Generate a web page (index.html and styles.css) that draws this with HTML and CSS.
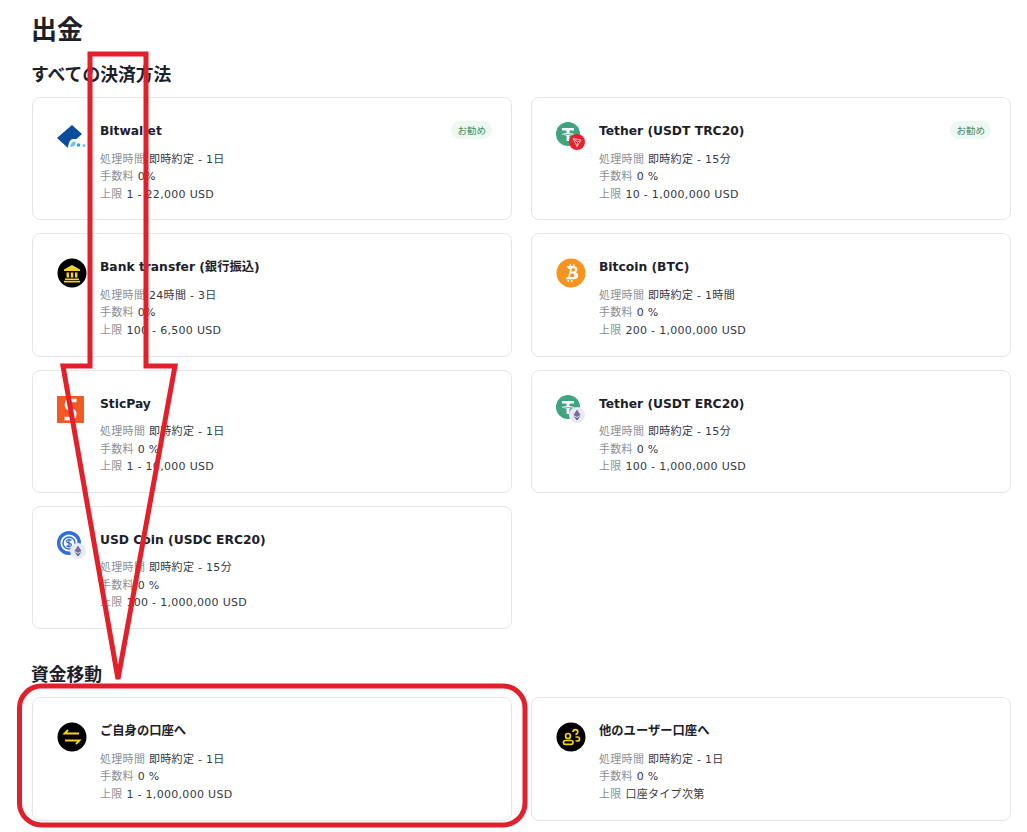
FILE: index.html
```html
<!DOCTYPE html>
<html lang="ja">
<head>
<meta charset="utf-8">
<title>出金</title>
<link rel="stylesheet" href="styles.css">
</head>
<body>
<svg class="defs" width="0" height="0" aria-hidden="true">
  <defs>
    <symbol id="tether" viewBox="0 0 24 24">
      <circle cx="12" cy="12" r="12" fill="#3fa47f"/>
      <path d="M6 6h12v2.400h-4.600v2.500c2.700.2 4.700.7 4.700 1.300s-2 1.100-4.700 1.300V19h-2.800v-5.500c-2.700-.2-4.700-.7-4.700-1.300s2-1.100 4.700-1.300V8.400H6z" fill="#fff"/>
      <path d="M6.500 12.100c1.500.5 9.500.5 11 0" fill="none" stroke="#3fa47f" stroke-width=".7"/>
    </symbol>
    <symbol id="eth" viewBox="0 0 16 16">
      <circle cx="8" cy="8" r="8" fill="#e9e9f3"/>
      <path d="M8 2.500 4.500 8 8 10l3.500-2z" fill="#6f6fa8"/>
      <path d="M4.500 9 8 13.500 11.500 9 8 11z" fill="#5a5a90"/>
    </symbol>
  </defs>
</svg>
<main class="page">
  <h1 class="page-title">出金</h1>
  <h2 class="section-title">すべての決済方法</h2>
  <section class="card-grid">
    <article class="card">
      <svg class="icon" viewBox="0 0 30 30"><path d="M15 3 25 12 19.500 17H16.500C13.500 17 11.500 20 11 26L0 16z" fill="#0b4c9c"/><path d="M13 25c.5-3 2-5.500 4-5.500s2 1.500 1.500 2.500-2 3-5.500 3z" fill="#6cc4e8"/><circle cx="21.500" cy="23" r="1.800" fill="#2d9fd8"/><circle cx="27" cy="23.500" r="1.500" fill="#6cc4e8"/></svg>
      <div class="info">
        <h3 class="name">Bitwallet</h3>
        <p class="row"><span class="label">処理時間</span> 即時約定 - 1日</p>
        <p class="row"><span class="label">手数料</span> 0%</p>
        <p class="row"><span class="label">上限</span> 1 - 22,000 USD</p>
      </div>
      <span class="badge">お勧め</span>
    </article>
    <article class="card">
      <span class="icon stack">
        <svg class="coin"><use href="#tether"/></svg>
        <svg class="chain" viewBox="0 0 16 16"><circle cx="8" cy="8" r="8" fill="#e8212c"/><path d="M4 4.500 12 6 8 12.500z M4 4.500 8.500 8 8 12.500 M12 6 8.500 8" fill="none" stroke="#fbd0d0" stroke-width=".9"/></svg>
      </span>
      <div class="info">
        <h3 class="name">Tether (USDT TRC20)</h3>
        <p class="row"><span class="label">処理時間</span> 即時約定 - 15分</p>
        <p class="row"><span class="label">手数料</span> 0 %</p>
        <p class="row"><span class="label">上限</span> 10 - 1,000,000 USD</p>
      </div>
      <span class="badge">お勧め</span>
    </article>
    <article class="card">
      <svg class="icon" viewBox="0 0 30 30"><circle cx="15" cy="15" r="14.500" fill="#000"/><path d="M15 7 7 11.500v1.500h16v-1.500z" fill="#f4d02c"/><path d="M9.500 14.500h2.500v5H9.500zM13.800 14.500h2.500v5h-2.500zM18 14.500h2.500v5H18zM8 20.500h14V22H8zM7 22.800h16v1.700H7z" fill="#f4d02c"/></svg>
      <div class="info">
        <h3 class="name">Bank transfer (銀行振込)</h3>
        <p class="row"><span class="label">処理時間</span> 24時間 - 3日</p>
        <p class="row"><span class="label">手数料</span> 0%</p>
        <p class="row"><span class="label">上限</span> 100 - 6,500 USD</p>
      </div>
    </article>
    <article class="card">
      <svg class="icon" viewBox="0 0 30 30"><circle cx="15" cy="15" r="14.500" fill="#f7941d"/><path d="M11 8h6.500c2.500 0 4 1.300 4 3.300 0 1.400-.8 2.400-2 2.900 1.700.4 2.700 1.600 2.700 3.300 0 2.400-1.800 3.800-4.500 3.800H10l.6-2.200h1.600l2-8.200h-1.800z M16 10.300l-.8 3.100h2c1.100 0 1.800-.6 1.800-1.700 0-.9-.6-1.400-1.600-1.400z M14.700 15.500l-.9 3.600h2.500c1.300 0 2-.7 2-1.900 0-1.100-.7-1.700-2-1.700z" fill="#fff" fill-rule="evenodd"/><path d="M14.500 6l-.5 2M18 6l-.5 2M12.500 22l-.5 2M16 22l-.5 2" stroke="#fff" stroke-width="1.300"/></svg>
      <div class="info">
        <h3 class="name">Bitcoin (BTC)</h3>
        <p class="row"><span class="label">処理時間</span> 即時約定 - 1時間</p>
        <p class="row"><span class="label">手数料</span> 0 %</p>
        <p class="row"><span class="label">上限</span> 200 - 1,000,000 USD</p>
      </div>
    </article>
    <article class="card">
      <svg class="icon" viewBox="0 0 30 30"><rect x="0" y="1" width="27" height="27" fill="#f15a24"/><path d="M19.500 5.500H13C10.800 5.500 9.500 7.200 9.500 9.500c0 2.300 1.200 3.500 3 4.400l2.500 1.300c1.800.9 2.700 2 2.700 3.900 0 2.600-1.300 4.400-3.700 4.400H7.500" fill="none" stroke="#fff" stroke-width="3.600"/></svg>
      <div class="info">
        <h3 class="name">SticPay</h3>
        <p class="row"><span class="label">処理時間</span> 即時約定 - 1日</p>
        <p class="row"><span class="label">手数料</span> 0 %</p>
        <p class="row"><span class="label">上限</span> 1 - 10,000 USD</p>
      </div>
    </article>
    <article class="card">
      <span class="icon stack">
        <svg class="coin"><use href="#tether"/></svg>
        <svg class="chain"><use href="#eth"/></svg>
      </span>
      <div class="info">
        <h3 class="name">Tether (USDT ERC20)</h3>
        <p class="row"><span class="label">処理時間</span> 即時約定 - 15分</p>
        <p class="row"><span class="label">手数料</span> 0 %</p>
        <p class="row"><span class="label">上限</span> 100 - 1,000,000 USD</p>
      </div>
    </article>
    <article class="card">
      <span class="icon stack">
        <svg class="coin" viewBox="0 0 24 24"><circle cx="12" cy="12" r="10.300" fill="none" stroke="#2f6fdc" stroke-width="3.400"/><circle cx="12" cy="12" r="6" fill="none" stroke="#2f6fdc" stroke-width="1.500"/><path d="M14.500 9.500c-1-1.200-5-1.200-5 .8 0 2.600 5 1 5 3.600 0 2-4 2-5 .6M12 7.500v9" fill="none" stroke="#2f6fdc" stroke-width="1.300"/></svg>
        <svg class="chain"><use href="#eth"/></svg>
      </span>
      <div class="info">
        <h3 class="name">USD Coin (USDC ERC20)</h3>
        <p class="row"><span class="label">処理時間</span> 即時約定 - 15分</p>
        <p class="row"><span class="label">手数料</span> 0 %</p>
        <p class="row"><span class="label">上限</span> 100 - 1,000,000 USD</p>
      </div>
    </article>
  </section>
  <h2 class="section-title transfer">資金移動</h2>
  <section class="card-grid">
    <article class="card">
      <svg class="icon" viewBox="0 0 30 30"><circle cx="15" cy="15" r="14.500" fill="#000"/><path d="M22 11.500H7.500L11 8M8 18.500h14.500L19 22" fill="none" stroke="#f7d117" stroke-width="1.800"/></svg>
      <div class="info">
        <h3 class="name">ご自身の口座へ</h3>
        <p class="row"><span class="label">処理時間</span> 即時約定 - 1日</p>
        <p class="row"><span class="label">手数料</span> 0 %</p>
        <p class="row"><span class="label">上限</span> 1 - 1,000,000 USD</p>
      </div>
    </article>
    <article class="card">
      <svg class="icon" viewBox="0 0 30 30"><circle cx="15" cy="15" r="14.500" fill="#000"/><circle cx="12" cy="14" r="2.500" fill="none" stroke="#f7d117" stroke-width="1.700"/><rect x="7.500" y="18.500" width="9.500" height="3.800" rx="1.800" fill="none" stroke="#f7d117" stroke-width="1.700"/><path d="M17 10a2.400 2.400 0 1 1 2.400 2.400M19.500 15h2c1.300 0 2 .8 2 1.900S22.800 19 21.500 19h-2" fill="none" stroke="#f7d117" stroke-width="1.700"/></svg>
      <div class="info">
        <h3 class="name">他のユーザー口座へ</h3>
        <p class="row"><span class="label">処理時間</span> 即時約定 - 1日</p>
        <p class="row"><span class="label">手数料</span> 0 %</p>
        <p class="row"><span class="label">上限</span> 口座タイプ次第</p>
      </div>
    </article>
  </section>
</main>
<svg class="annotation" viewBox="0 0 1027 832" aria-hidden="true">
  <path d="M90 54H146V366H175L118 679 63 366H90Z" fill="none" stroke="#e2202c" stroke-width="5"/>
  <rect x="19.500" y="686" width="505.500" height="139" rx="22" fill="none" stroke="#e2202c" stroke-width="5"/>
</svg>
</body>
</html>
```
FILE: styles.css
```css
* { box-sizing: border-box; }
html, body { margin: 0; padding: 0; background: #fff; }
body {
  position: relative;
  width: 1027px;
  height: 832px;
  overflow: hidden;
  font-family: "DejaVu Sans", "Noto Sans CJK JP", sans-serif;
  color: #1c2129;
}
.defs { position: absolute; }
.page { padding: 12px 16px 0 32px; }
.page-title {
  margin: 0 0 0 -1px;
  font-size: 26px;
  line-height: 32px;
  font-weight: 700;
  font-family: "Noto Sans CJK JP", sans-serif;
}
.section-title {
  margin: 16px 0 11px -1px;
  font-size: 17.800px;
  line-height: 26px;
  font-weight: 700;
  font-family: "Noto Sans CJK JP", sans-serif;
}
.section-title.transfer { margin: 31px 0 11px -1px; }
.card-grid {
  display: grid;
  grid-template-columns: 480px 480px;
  grid-auto-rows: 123.330px;
  column-gap: 19px;
  row-gap: 13px;
}
.card {
  display: flex;
  align-items: flex-start;
  gap: 13px;
  padding: 24px 19px 0 24px;
  border: 1px solid #e6e6e6;
  border-radius: 8px;
  background: #fff;
}
.icon { flex: none; display: block; width: 30px; height: 30px; }
.stack { position: relative; }
.coin { position: absolute; left: 0; top: 0; width: 24px; height: 24px; }
.chain { position: absolute; left: 13px; top: 12px; width: 16px; height: 16px; }
.info { flex: 1; min-width: 0; }
.name {
  margin: 0 0 10.500px;
  font-size: 12.300px;
  line-height: 18px;
  font-weight: 700;
  color: #1c2129;
}
.row {
  margin: 0;
  font-size: 11px;
  line-height: 17.500px;
  letter-spacing: .3px;
  color: #33383f;
}
.label { color: #8b8f94; }
.badge {
  flex: none;
  height: 18px;
  margin-top: -1px;
  padding: 0 6px;
  border-radius: 9px;
  background: #eef8f2;
  color: #3b8a5e;
  font-size: 9.500px;
  line-height: 18px;
  font-family: "Noto Sans CJK JP", sans-serif;
}
.annotation { position: absolute; left: 0; top: 0; width: 1027px; height: 832px; pointer-events: none; }
```
